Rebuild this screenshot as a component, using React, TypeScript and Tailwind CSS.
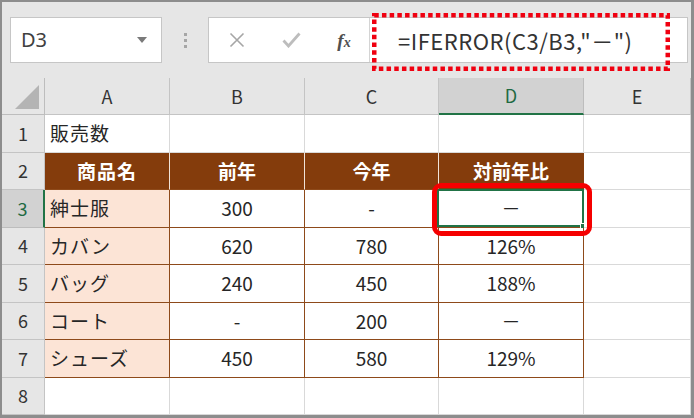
import React from "react"

// column widths: row header, A, B, C, D, E
const cols = "grid-cols-[43px_125px_135px_134px_145px_1fr]"
const font = "font-['Noto_Sans_CJK_JP','Noto_Sans',sans-serif]"

const letters = ["A", "B", "C", "D", "E"]

const body = [
	["販売数", "", "", "", ""],
	["商品名", "前年", "今年", "対前年比", ""],
	["紳士服", "300", "-", "－", ""],
	["カバン", "620", "780", "126%", ""],
	["バッグ", "240", "450", "188%", ""],
	["コート", "-", "200", "－", ""],
	["シューズ", "450", "580", "129%", ""],
	["", "", "", "", ""],
]

function Cell({ r, c, value }: { r: number; c: number; value: string }) {
	const inTable = r >= 1 && r <= 6 && c <= 3
	const isHead = r === 1 && c <= 3
	const isSel = r === 2 && c === 3

	let cls = "relative flex items-center border-b border-r text-[19px] text-[#262626] "
	if (isHead) {
		cls +=
			"bg-[#843c0c] text-white font-bold justify-center " +
			(c === 3 ? "border-r-[#843c0c] border-b-[#8e4a1a]" : "border-r-[#f1e3d8] border-b-[#8e4a1a]")
	} else if (inTable) {
		cls += "border-[#8e4a1a] "
		cls += c === 0 ? "bg-[#fce4d6] justify-start pl-[5px]" : "bg-white justify-center"
	} else {
		cls += "bg-white border-[#d9d9d9] "
		cls += c === 0 ? "justify-start pl-[5px]" : "justify-center"
	}

	return (
		<div className={cls}>
			<span className={c === 0 ? "tracking-[1px]" : ""}>{value}</span>
			{isSel && (
				<>
					<div className="absolute -left-[2px] -top-[1px] -right-[1px] bottom-0 border-2 border-[#217346]" />
					<div className="absolute -right-[4px] -bottom-[3px] w-[7px] h-[7px] bg-[#217346] border border-white" />
				</>
			)}
		</div>
	)
}

export default function App() {
	return (
		<div
			className={`relative w-[694px] h-[418px] overflow-hidden bg-[#e6e6e6] border-l-2 border-t-2 border-r-[3px] border-b-[3px] border-[#8d8d8d] ${font}`}
		>
			{/* toolbar */}
			<div className="h-[76px] flex items-center pl-[8px] pr-[3px]">
				<div className="w-[152px] h-[46px] bg-white border border-[#c6c6c6] flex items-center justify-between pl-[10px] pr-[14px]">
					<span className="text-[20px] text-[#404040] font-['Noto_Sans',sans-serif]">D3</span>
					<svg width="10" height="6" viewBox="0 0 10 6">
						<path d="M0 0h10L5 6z" fill="#7a7a7a" />
					</svg>
				</div>
				<div className="w-[46px] flex flex-col items-center gap-[3px]">
					<span className="w-[3px] h-[3px] bg-[#a6a6a6]" />
					<span className="w-[3px] h-[3px] bg-[#a6a6a6]" />
					<span className="w-[3px] h-[3px] bg-[#a6a6a6]" />
				</div>
				<div className="flex-1 h-[46px] bg-white border border-[#c6c6c6] flex items-center">
					<div className="w-[55px] flex justify-center">
						<svg width="16" height="16" viewBox="0 0 16 16">
							<path d="M1.5 1.5l13 13M14.5 1.5l-13 13" stroke="#a6a6a6" strokeWidth="1.6" />
						</svg>
					</div>
					<div className="w-[55px] flex justify-center">
						<svg width="19" height="16" viewBox="0 0 19 16">
							<path d="M1.5 8.5l5 5.5L17.5 1.5" stroke="#bdbdbd" strokeWidth="2.8" fill="none" />
						</svg>
					</div>
					<div className="w-[50px] flex justify-center">
						<span className="font-['Liberation_Serif',serif] italic font-bold text-[19px] text-[#505050] leading-none">
							f<span className="text-[14px]">x</span>
						</span>
					</div>
					<div className="w-px h-full bg-[#d4d4d4]" />
					<div className="pl-[28px] text-[22px] text-[#333] tracking-[0.5px] whitespace-nowrap">
						=IFERROR(C3/B3,"－")
					</div>
				</div>
			</div>

			{/* sheet */}
			<div className={`grid ${cols} grid-rows-[37px_repeat(8,37.5px)]`}>
				<div className="relative bg-[#e6e6e6] border-b border-r border-[#bdbdbd]">
					<svg className="absolute left-[13px] top-[7px]" width="24" height="24" viewBox="0 0 24 24">
						<path d="M24 0V24H0z" fill="#b4b4b4" />
					</svg>
				</div>
				{letters.map((l, i) => (
					<div
						key={l}
						className={
							i === 3
								? "flex items-center justify-center bg-[#d2d2d2] border-r border-r-[#bdbdbd] border-b-2 border-b-[#217346] text-[18px] text-[#1f6a43]"
								: "flex items-center justify-center bg-[#e6e6e6] border-r border-b border-[#c4c4c4] text-[18px] text-[#333]"
						}
					>
						{l}
					</div>
				))}
				{body.map((row, r) => (
					<React.Fragment key={r}>
						<div
							className={
								r === 2
									? "flex items-center justify-center bg-[#d2d2d2] border-b border-b-[#bdbdbd] border-r-2 border-r-[#217346] text-[18px] text-[#1f6a43]"
									: "flex items-center justify-center bg-[#e6e6e6] border-b border-r border-[#c4c4c4] text-[18px] text-[#333]"
							}
						>
							{r + 1}
						</div>
						{row.map((v, c) => (
							<Cell key={c} r={r} c={c} value={v} />
						))}
					</React.Fragment>
				))}
			</div>

			{/* annotations */}
			<svg className="absolute left-[370px] top-[11px]" width="298" height="58" viewBox="0 0 298 58">
				<rect x="2.25" y="2.25" width="293.5" height="53.5" fill="none" stroke="#f00010" strokeWidth="4.5" strokeDasharray="4.5 3.2" />
			</svg>
			<div className="absolute left-[430px] top-[181px] w-[160px] h-[53px] border-[5px] border-[#f50000] rounded-[9px]" />
		</div>
	)
}
